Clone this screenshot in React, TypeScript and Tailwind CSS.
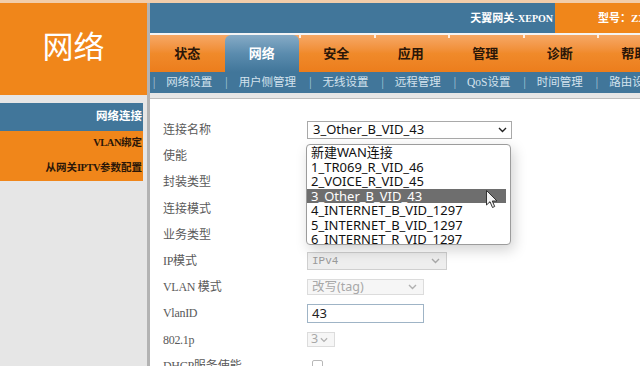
import React from "react";

const Chevron = ({ color = "#222", w = 9 }: { color?: string; w?: number }) => (
  <svg width={w} height={6} viewBox="0 0 9 6" fill="none">
    <path d="M1 1 L4.5 4.5 L8 1" stroke={color} strokeWidth={1.4} />
  </svg>
);

const Lat = ({ children }: { children: React.ReactNode }) => (
  <span className="font-['Liberation_Serif',serif] text-[12px] tracking-[-0.3px]">{children}</span>
);

const tabs = ["状态", "网络", "安全", "应用", "管理", "诊断", "帮助"];
const subs = ["网络设置", "用户侧管理", "无线设置", "远程管理", "QoS设置", "时间管理", "路由设置"];
const options = [
  "新建WAN连接",
  "1_TR069_R_VID_46",
  "2_VOICE_R_VID_45",
  "3_Other_B_VID_43",
  "4_INTERNET_B_VID_1297",
  "5_INTERNET_B_VID_1297",
  "6_INTERNET_R_VID_1297",
];

export default function App() {
  const sans = "font-['Noto_Sans','Noto_Sans_CJK_SC',sans-serif]";
  return (
    <div className="w-[640px] h-[366px] overflow-hidden bg-[#e6e6e6] flex flex-col font-['Liberation_Serif','Noto_Sans_CJK_SC',serif]">
      <div className="h-[3px] bg-[#f2cdaa] shrink-0" />
      <div className="flex flex-1 min-h-0">
        {/* left column */}
        <div className="w-[147px] flex flex-col shrink-0">
          <div className="h-[92px] bg-[#f0861a] flex items-center justify-center text-white text-[31px] pb-[2px]">
            网络
          </div>
          <div className="h-[8px]" />
          <div className="pr-[4px] flex flex-col">
            <div className="h-[28px] bg-[#41769a] flex items-center justify-end text-white font-bold text-[11.5px] pr-[1px]">
              网络连接
            </div>
            <div className="bg-[#f0861a] flex flex-col pb-[1px]">
              <div className="h-[24px] flex items-center justify-end text-[#2a1608] font-bold text-[10.5px] pr-[1px]">
                <span className="tracking-[-0.5px]">VLAN</span>绑定
              </div>
              <div className="h-[25px] flex items-center justify-end text-[#2a1608] font-bold text-[10.5px] pr-[1px]">
                从网关<span className="tracking-[-0.5px]">IPTV</span>参数配置
              </div>
            </div>
          </div>
        </div>
        <div className="w-[3px] bg-[#b3b3b3] shrink-0" />
        {/* right column */}
        <div className="flex-1 flex flex-col min-w-0">
          <div className="h-[30px] flex shrink-0">
            <div className="flex-1 bg-[#41769a] flex items-center justify-end pr-[2px] text-white font-bold text-[11px]">
              天翼网关-<span className="text-[10px]">XEPON</span>
            </div>
            <div className="w-[85px] bg-[#f0861a] flex items-center pl-[43px] text-white font-bold text-[11px] whitespace-nowrap overflow-hidden">
              型号：ZXHN F650
            </div>
          </div>
          <div className="h-[2px] bg-[#f4f4f4] shrink-0" />
          <div className="h-[37px] flex shrink-0 bg-gradient-to-b from-[#f6a865] via-[#f08a2a] to-[#ec7d1c] overflow-hidden">
            {tabs.map((t, i) => (
              <div
                key={t}
                className={
                  "relative w-[74.5px] shrink-0 flex items-center justify-center text-[13px] font-bold " +
                  (i === 1
                    ? "bg-gradient-to-b from-[#86abc6] via-[#5b8cae] to-[#41769a] text-white rounded-t-[6px]"
                    : "text-[#2a1608]")
                }
              >
                {i > 1 && <span className="absolute left-0 top-0 w-[2px] h-[3px] bg-white/80" />}
                {t}
              </div>
            ))}
          </div>
          <div className="h-[21px] bg-[#41769a] flex items-center text-[#d3e2ed] text-[11.5px] whitespace-nowrap overflow-hidden shrink-0">
            {subs.map((s) => (
              <React.Fragment key={s}>
                <span className="pl-[3px] pr-[11px] text-[#b8cfdf]">|</span>
                <span className="pr-[10px]">{s}</span>
              </React.Fragment>
            ))}
          </div>
          <div className="h-[6px] bg-[#e6e6e6] border-b border-[#bdbdbd] shrink-0" />
          {/* main */}
          <div className="flex-1 bg-white relative pl-[13px] pt-[18px]">
            <div className="flex flex-col text-[12px] text-[#5a5a5a]">
              <div className="h-[26.2px] flex items-center">
                <div className="w-[144px] shrink-0">连接名称</div>
                <div className={"w-[205px] h-[18px] border border-[#a9a9a9] bg-white flex items-center justify-between pl-[5px] pr-[4px] text-[13px] text-[#111] " + sans}>
                  <span>3_Other_B_VID_43</span>
                  <Chevron />
                </div>
              </div>
              <div className="h-[26.2px] flex items-center">
                <div className="w-[144px] shrink-0">使能</div>
              </div>
              <div className="h-[26.2px] flex items-center">
                <div className="w-[144px] shrink-0">封装类型</div>
              </div>
              <div className="h-[26.2px] flex items-center">
                <div className="w-[144px] shrink-0">连接模式</div>
              </div>
              <div className="h-[26.2px] flex items-center">
                <div className="w-[144px] shrink-0">业务类型</div>
              </div>
              <div className="h-[26.2px] flex items-center">
                <div className="w-[144px] shrink-0"><Lat>IP</Lat>模式</div>
                <div className="w-[140px] h-[18px] border border-[#cfcfcf] bg-[#eeeeee] flex items-center justify-between pl-[4px] pr-[6px] text-[#9a9a9a]">
                  <span className="font-['Liberation_Mono',monospace] text-[11px]">IPv4</span>
                  <Chevron color="#a8a8a8" />
                </div>
              </div>
              <div className="h-[26.2px] flex items-center">
                <div className="w-[144px] shrink-0"><Lat>VLAN </Lat> 模式</div>
                <div className={"w-[117px] h-[16px] border border-[#dcdcdc] bg-[#f6f6f6] flex items-center justify-between pl-[4px] pr-[6px] text-[#a8a8a8] text-[12.5px] " + sans}>
                  <span>改写(tag)</span>
                  <Chevron color="#b0b0b0" />
                </div>
              </div>
              <div className="h-[26.2px] flex items-center">
                <div className="w-[144px] shrink-0"><Lat>VlanID</Lat></div>
                <div className={"w-[117px] h-[19px] border border-[#9fb4c6] bg-white flex items-center pl-[4px] text-[#222] text-[13px] " + sans}>
                  43
                </div>
              </div>
              <div className="h-[26.2px] flex items-center">
                <div className="w-[144px] shrink-0"><Lat>802.1p</Lat></div>
                <div className={"w-[28px] h-[15px] border border-[#dcdcdc] bg-[#f6f6f6] flex items-center gap-[2px] pl-[3px] text-[#a8a8a8] text-[12.5px] " + sans}>
                  <span>3</span>
                  <Chevron color="#b0b0b0" w={8} />
                </div>
              </div>
              <div className="h-[26.2px] flex items-center">
                <div className="w-[144px] shrink-0"><Lat>DHCP</Lat>服务使能</div>
                <div className="ml-[5px] w-[11px] h-[11px] border border-[#b8b8b8] rounded-[2px] bg-white" />
              </div>
            </div>

            {/* dropdown overlay */}
            <div className={"absolute left-[156px] top-[45px] w-[205px] h-[101px] border border-[#9c9c9c] rounded-[4px] bg-white overflow-hidden shadow-[3px_5px_14px_rgba(0,0,0,0.18)] text-[13px] text-[#111] " + sans}>
              {options.map((o, i) => (
                <div
                  key={o}
                  className={
                    "h-[14.5px] leading-[14.5px] pl-[4px] whitespace-nowrap " +
                    (i === 3 ? "bg-[#6e6e6e] text-white mr-[4px]" : "")
                  }
                >
                  {o}
                </div>
              ))}
            </div>

            {/* cursor */}
            <svg className="absolute left-[336px] top-[91px]" width="12" height="19" viewBox="0 0 12 19">
              <path d="M0.5 0.5 L0.5 15 L4 11.7 L6.5 17.5 L8.7 16.5 L6.3 11 L11 11 Z" fill="#f4f4f4" stroke="#333" strokeWidth="1" strokeLinejoin="round" />
            </svg>
          </div>
        </div>
      </div>
    </div>
  );
}
